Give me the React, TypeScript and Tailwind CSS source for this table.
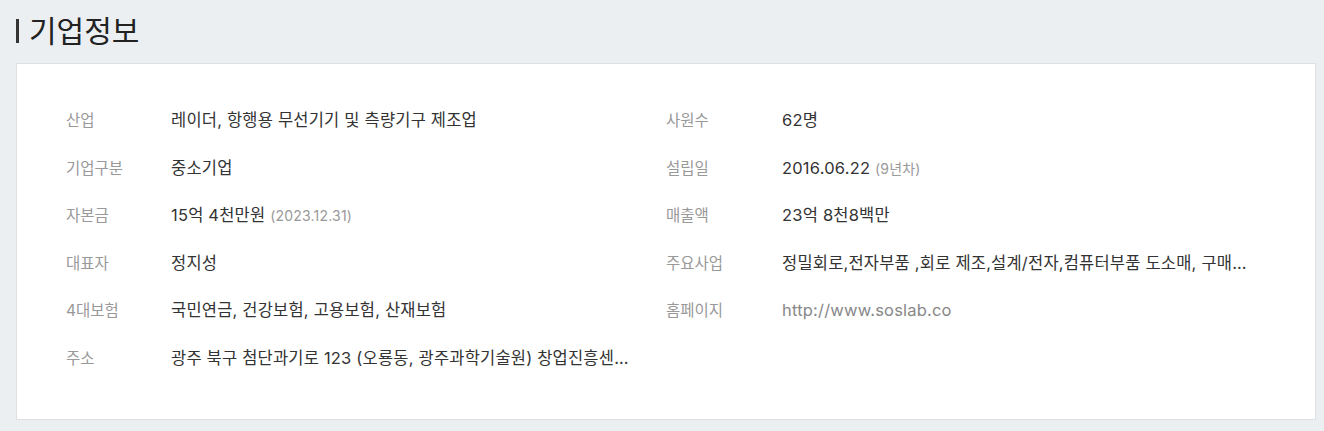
import React from "react";

const font = { fontFamily: 'Inter, "Noto Sans CJK KR", sans-serif' };

type Row = { label: string; value: React.ReactNode };

const left: Row[] = [
  { label: "산업", value: "레이더, 항행용 무선기기 및 측량기구 제조업" },
  { label: "기업구분", value: "중소기업" },
  {
    label: "자본금",
    value: (
      <>
        15억 4천만원 <span className="text-[14px] text-[#999]">(2023.12.31)</span>
      </>
    ),
  },
  { label: "대표자", value: "정지성" },
  { label: "4대보험", value: "국민연금, 건강보험, 고용보험, 산재보험" },
  {
    label: "주소",
    value: "광주 북구 첨단과기로 123 (오룡동, 광주과학기술원) 창업진흥센터 2층",
  },
];

const right: Row[] = [
  { label: "사원수", value: "62명" },
  {
    label: "설립일",
    value: (
      <>
        2016.06.22 <span className="text-[14px] text-[#999]">(9년차)</span>
      </>
    ),
  },
  { label: "매출액", value: "23억 8천8백만" },
  {
    label: "주요사업",
    value: "정밀회로,전자부품 ,회로 제조,설계/전자,컴퓨터부품 도소매, 구매대행, 무역업",
  },
  {
    label: "홈페이지",
    value: <span className="text-[#888]">http://www.soslab.co</span>,
  },
];

function Column({ rows, labelW, valueW }: { rows: Row[]; labelW: string; valueW: string }) {
  return (
    <div className="flex flex-col">
      {rows.map((r) => (
        <div key={r.label} className="flex h-[47.5px] items-center">
          <div className={`${labelW} shrink-0 text-[15.5px] text-[#999]`}>{r.label}</div>
          <div className={`${valueW} truncate text-[16.5px] tracking-[0.2px] text-[#333]`}>{r.value}</div>
        </div>
      ))}
    </div>
  );
}

export default function App() {
  return (
    <div className="min-h-[431px] w-[1324px] bg-[#eceff2] pl-4 pr-2 pt-[12px] pb-[11px]" style={font}>
      <div className="flex items-center">
        <div className="h-[24px] w-[3px] bg-[#333]" />
        <h2 className="ml-[10px] text-[30px] leading-[38px] font-normal text-[#222]">기업정보</h2>
      </div>
      <div className="mt-[13px] h-[357px] border border-[#e0e0e0] bg-white pt-[33px] pl-[49px] pr-[49px]">
        <div className="grid grid-cols-2">
          <Column rows={left} labelW="w-[105px]" valueW="w-[462px]" />
          <Column rows={right} labelW="w-[116px]" valueW="w-[466px]" />
        </div>
      </div>
    </div>
  );
}
